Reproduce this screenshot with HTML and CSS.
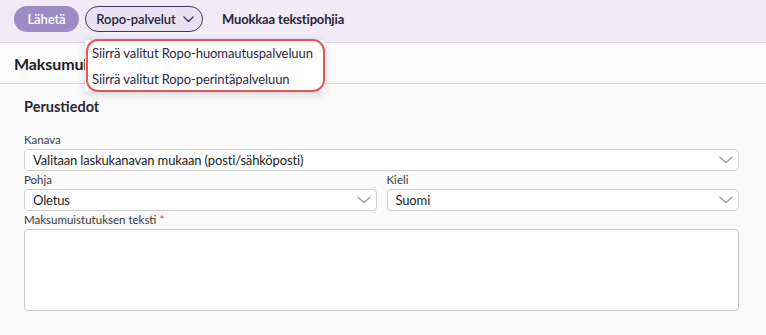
FILE: index.html
```html
<!DOCTYPE html>
<html lang="fi">
<head>
<meta charset="utf-8">
<title>Maksumuistutus</title>
<link rel="stylesheet" href="styles.css">
</head>
<body>
<div class="page">
  <div class="toolbar">
    <button class="btn btn-primary">Lähetä</button>
    <div class="menu-wrap">
      <button class="btn btn-outline">Ropo-palvelut
        <svg class="btn-chev" width="11" height="7" viewBox="0 0 11 7"><polyline points="1,1 5.5,5.5 10,1" fill="none" stroke="#3a3160" stroke-width="1.4" stroke-linecap="round" stroke-linejoin="round"/></svg>
      </button>
      <div class="dropdown">
        <div class="dropdown-item">Siirrä valitut Ropo-huomautuspalveluun</div>
        <div class="dropdown-item">Siirrä valitut Ropo-perintäpalveluun</div>
        <div class="highlight"></div>
      </div>
    </div>
    <a class="toolbar-link">Muokkaa tekstipohjia</a>
  </div>
  <div class="header">
    <h1 class="title">Maksumuistutus</h1>
  </div>
  <div class="content">
    <h2 class="section-title">Perustiedot</h2>
    <div class="field">
      <label class="label">Kanava</label>
      <div class="select">
        <span>Valitaan laskukanavan mukaan (posti/sähköposti)</span>
        <svg class="chev" width="14" height="8" viewBox="0 0 14 8"><polyline points="1,1.2 7,6.6 13,1.2" fill="none" stroke="#9b9b9b" stroke-width="1.3" stroke-linecap="round" stroke-linejoin="round"/></svg>
      </div>
    </div>
    <div class="row">
      <div class="field">
        <label class="label">Pohja</label>
        <div class="select">
          <span>Oletus</span>
          <svg class="chev" width="14" height="8" viewBox="0 0 14 8"><polyline points="1,1.2 7,6.6 13,1.2" fill="none" stroke="#9b9b9b" stroke-width="1.3" stroke-linecap="round" stroke-linejoin="round"/></svg>
        </div>
      </div>
      <div class="field">
        <label class="label">Kieli</label>
        <div class="select">
          <span>Suomi</span>
          <svg class="chev" width="14" height="8" viewBox="0 0 14 8"><polyline points="1,1.2 7,6.6 13,1.2" fill="none" stroke="#9b9b9b" stroke-width="1.3" stroke-linecap="round" stroke-linejoin="round"/></svg>
        </div>
      </div>
    </div>
    <div class="field">
      <label class="label">Maksumuistutuksen teksti <span class="req">*</span></label>
      <div class="textarea"></div>
    </div>
  </div>
</div>
</body>
</html>
```
FILE: styles.css
```css
* { box-sizing: border-box; }
html, body { margin: 0; padding: 0; }
body {
  background: #fafafa;
  font-family: Lato, "Liberation Sans", sans-serif;
  color: #26232e;
  width: 766px;
  height: 335px;
  overflow: hidden;
}
.toolbar {
  height: 43px;
  background: #f1ebf8;
  border-bottom: 1px solid #d8d5dc;
  display: flex;
  align-items: flex-start;
  padding: 6px 14px 0;
}
.btn {
  font-family: inherit;
  height: 26px;
  border-radius: 13px;
  font-size: 13px;
  display: flex;
  align-items: center;
  justify-content: center;
  cursor: pointer;
  letter-spacing: -0.1px;
}
.btn-primary {
  width: 65px;
  background: #9c8cc5;
  border: none;
  color: #fff;
  font-weight: 600;
}
.menu-wrap {
  position: relative;
  margin-left: 6px;
}
.btn-outline {
  width: 118px;
  background: #e9e2f3;
  border: 1px solid #3e3567;
  color: #29223f;
  font-weight: 600;
  padding: 0 0 0 2px;
  gap: 7px;
}
.btn-chev { margin-top: 1px; }
.toolbar-link {
  margin-left: 19px;
  line-height: 26px;
  font-size: 13px;
  font-weight: 700;
  color: #2a2538;
  letter-spacing: -0.15px;
}
.dropdown {
  position: absolute;
  top: 34px;
  left: 0;
  width: 240px;
  height: 52px;
  background: #fff;
  border-radius: 3px;
  box-shadow: 0 2px 8px rgba(0,0,0,0.16);
  z-index: 10;
  padding-top: 0;
}
.dropdown-item {
  height: 26px;
  line-height: 26px;
  padding-left: 7px;
  font-size: 13px;
  color: #2d2645;
  white-space: nowrap;
  letter-spacing: -0.1px;
}
.highlight {
  position: absolute;
  left: 1px;
  top: -1px;
  right: 0;
  bottom: 0;
  border: 2px solid #e2555e;
  border-radius: 12px;
  pointer-events: none;
}
.header {
  height: 41px;
  border-bottom: 1px solid #d6d6d6;
  display: flex;
  align-items: center;
  padding-left: 14px;
  background: #fbfbfb;
}
.title {
  margin: 0;
  font-size: 16px;
  font-weight: 700;
  color: #1f1d24;
  letter-spacing: -0.1px;
}
.content {
  padding: 14px 27px 0 24px;
}
.section-title {
  margin: 0 0 16px;
  font-size: 14.5px;
  line-height: 18px;
  font-weight: 700;
  color: #2a2733;
}
.field {
  display: flex;
  flex-direction: column;
}
.label {
  font-size: 11.5px;
  line-height: 16px;
  height: 17px;
  color: #3b3842;
}
.req { color: #d64a4a; }
.select {
  height: 22px;
  background: #fff;
  border: 1px solid #d2d2d2;
  border-radius: 4px;
  display: flex;
  align-items: center;
  justify-content: space-between;
  padding: 0 5px 0 8px;
  font-size: 13px;
  color: #222;
  letter-spacing: -0.15px;
}
.chev { flex: none; }
.row {
  display: grid;
  grid-template-columns: 1fr 1fr;
  gap: 10px;
  margin-top: 1px;
}
.row + .field { margin-top: 1px; }
.textarea {
  height: 82px;
  background: #fff;
  border: 1px solid #c6c6c6;
  border-radius: 4px;
}
```
